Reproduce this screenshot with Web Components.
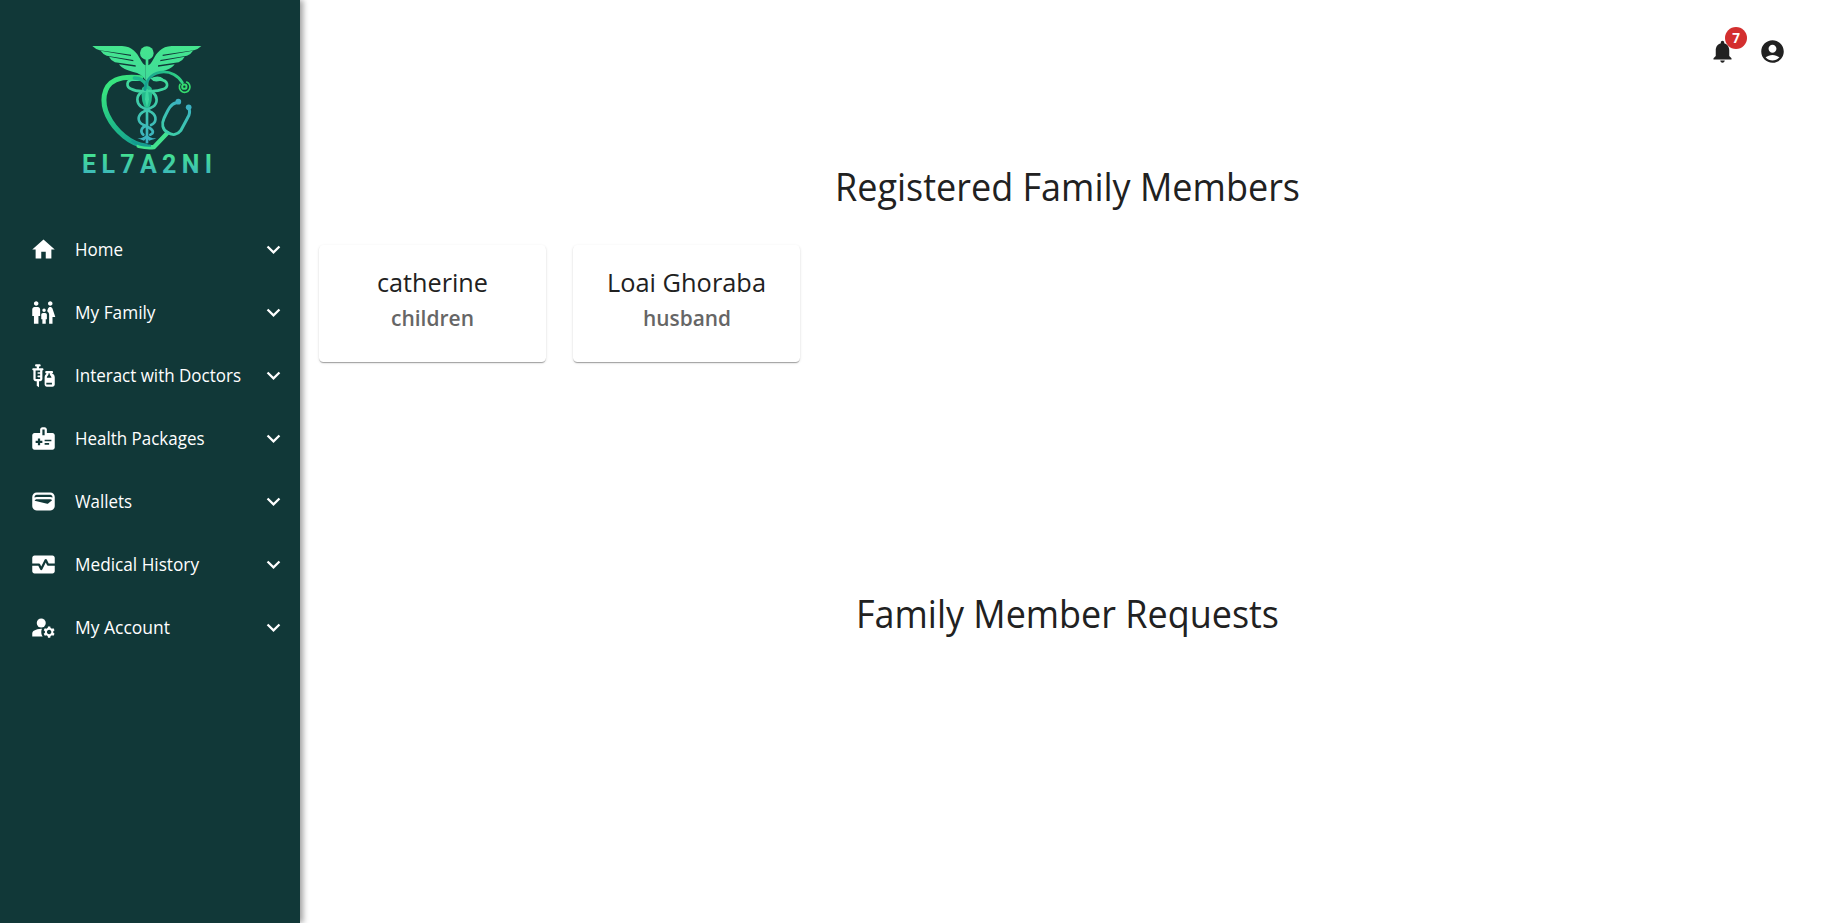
<!DOCTYPE html>
<html lang="en">
<head>
<meta charset="utf-8">
<title>El7a2ni</title>
<style>
html,body{margin:0;height:100%;overflow:hidden;background:#fff}
body{font-family:"Open Sans","Noto Sans",sans-serif;color:#212121}
</style>
</head>
<body>
<family-page></family-page>
<script>
const ICONS = {
  home:'<path d="M10 20v-6h4v6h5v-8h3L12 3 2 12h3v8z"/>',
  family:'<path d="M16 4c0-1.11.89-2 2-2s2 .89 2 2-.89 2-2 2-2-.89-2-2zm4 18v-6h2.5l-2.54-7.63C19.68 7.55 18.92 7 18.06 7h-.12c-.86 0-1.63.55-1.9 1.37l-.86 2.58c1.08.6 1.82 1.73 1.82 3.05v8h3zm-7.5-10.5c.83 0 1.5-.67 1.5-1.5s-.67-1.5-1.5-1.5S11 9.17 11 10s.67 1.5 1.5 1.5zM5.5 6c1.11 0 2-.89 2-2s-.89-2-2-2-2 .89-2 2 .89 2 2 2zm2 16v-7H9V9c0-1.1-.9-2-2-2H4c-1.1 0-2 .9-2 2v6h1.5v7h4zm6.5 0v-4h1v-4c0-.82-.68-1.5-1.5-1.5h-2c-.82 0-1.5.68-1.5 1.5v4h1v4h3z"/>',
  vaccines:'<path d="M11 5.5H8V4h.5c.55 0 1-.45 1-1s-.45-1-1-1h-3c-.55 0-1 .45-1 1s.45 1 1 1H6v1.5H3c-.55 0-1 .45-1 1s.45 1 1 1V15c0 1.1.9 2 2 2h1v4l2 1.5V17h1c1.1 0 2-.9 2-2V7.5c.55 0 1-.45 1-1s-.45-1-1-1zM9 9H7.25c-.41 0-.75.34-.75.75s.34.75.75.75H9V12H7.25c-.41 0-.75.34-.75.75s.34.75.75.75H9V15H5V7.5h4V9zm10.5 1.5V10c.55 0 1-.45 1-1s-.45-1-1-1h-5c-.55 0-1 .45-1 1s.45 1 1 1v.5c0 .5-1.5 1.16-1.5 3V20c0 1.1.9 2 2 2h5c1.1 0 2-.9 2-2v-6.5c0-1.84-1.5-2.5-1.5-3zm-3 0V10h1v.5c0 1.6 1.5 2 1.5 3v.5h-4v-.5c0-1 1.5-1.4 1.5-3zm3 9.5h-5v-1.5h5V20z"/>',
  medical:'<path d="M20 7h-5V4c0-1.1-.9-2-2-2h-2c-1.1 0-2 .9-2 2v3H4c-1.1 0-2 .9-2 2v11c0 1.1.9 2 2 2h16c1.1 0 2-.9 2-2V9c0-1.1-.9-2-2-2zm-9-3h2v5h-2V4zm0 12H9v2H7v-2H5v-2h2v-2h2v2h2v2zm2-1.5V13h6v1.5h-6zm0 3V16h4v1.5h-4z"/>',
  wallet:'<path d="M18 4H6C3.79 4 2 5.79 2 8v8c0 2.21 1.79 4 4 4h12c2.21 0 4-1.79 4-4V8c0-2.21-1.79-4-4-4zm-1.86 9.77c-.24.2-.57.28-.88.2L4.15 11.25C4.45 10.52 5.16 10 6 10h12c.67 0 1.26.34 1.63.84l-3.49 2.93zM6 6h12c1.1 0 2 .9 2 2v.55C19.41 8.21 18.73 8 18 8H6c-.73 0-1.41.21-2 .55V8c0-1.1.9-2 2-2z"/>',
  monitor:'<path d="M15.11 12.45 14 10.24l-3.11 6.21c-.16.34-.51.55-.89.55s-.73-.21-.89-.55L7.38 13H2v5c0 1.1.9 2 2 2h16c1.1 0 2-.9 2-2v-5h-6c-.38 0-.73-.21-.89-.55z"/><path d="M20 4H4c-1.1 0-2 .9-2 2v5h6c.38 0 .73.21.89.55L10 13.76l3.11-6.21c.34-.68 1.45-.68 1.79 0L16.62 11H22V6c0-1.1-.9-2-2-2z"/>',
  account:'<circle cx="10" cy="8" r="4"/><path d="M10.67 13.02c-.22-.01-.44-.02-.67-.02-2.42 0-4.68.67-6.61 1.82-.88.52-1.39 1.5-1.39 2.53V20h9.26c-.79-1.13-1.26-2.51-1.26-4 0-1.07.25-2.07.67-2.98zM20.75 16c0-.22-.03-.42-.06-.63l1.14-1.01-1-1.73-1.45.49c-.32-.27-.68-.48-1.08-.63L18 11h-2l-.3 1.49c-.4.15-.76.36-1.08.63l-1.45-.49-1 1.73 1.14 1.01c-.03.21-.06.41-.06.63s.03.42.06.63l-1.14 1.01 1 1.73 1.45-.49c.32.27.68.48 1.08.63L16 21h2l.3-1.49c.4-.15.76-.36 1.08-.63l1.45.49 1-1.73-1.14-1.01c.03-.21.06-.41.06-.63zM17 18c-1.1 0-2-.9-2-2s.9-2 2-2 2 .9 2 2-.9 2-2 2z"/>',
  chevron:'<path d="M16.59 8.59 12 13.17 7.41 8.59 6 10l6 6 6-6z"/>',
  bell:'<path d="M12 22c1.1 0 2-.9 2-2h-4c0 1.1.89 2 2 2zm6-6v-5c0-3.07-1.64-5.64-4.5-6.32V4c0-.83-.67-1.5-1.5-1.5s-1.5.67-1.5 1.5v.68C7.63 5.36 6 7.92 6 11v5l-2 2v1h16v-1l-2-2z"/>',
  user:'<path d="M12 2C6.48 2 2 6.48 2 12s4.48 10 10 10 10-4.48 10-10S17.52 2 12 2zm0 4c1.93 0 3.5 1.57 3.5 3.5S13.93 13 12 13s-3.5-1.57-3.5-3.5S10.07 6 12 6zm0 14c-2.03 0-4.43-.82-6.14-2.88C7.55 15.8 9.68 15 12 15s4.45.8 6.14 2.12C16.43 19.18 14.03 20 12 20z"/>'
};
const define = (name, html) => customElements.define(name, class extends HTMLElement {
  constructor(){
    super();
    const t = document.createElement('template');
    t.innerHTML = typeof html === 'function' ? html(this) : html;
    this.attachShadow({mode:'open'}).append(t.content.cloneNode(true));
  }
});

define('ui-icon', el => `<style>:host{display:block;flex:none;width:27px;height:27px}svg{display:block;width:100%;height:100%;fill:currentColor}</style>
<svg viewBox="0 0 24 24">${ICONS[el.getAttribute('name')]}</svg>`);

/* One line of text condensed to the width given by its attribute. */
customElements.define('fit-text', class extends HTMLElement {
  constructor(){
    super();
    this.attachShadow({mode:'open'}).innerHTML = `<style>:host{display:block;flex:none;white-space:nowrap}span{display:inline-block;transform-origin:0 50%}</style><span><slot></slot></span>`;
  }
  connectedCallback(){
    const w = +this.getAttribute('width'), s = this.shadowRoot.querySelector('span');
    this.style.width = w + 'px';
    s.style.transform = `scaleX(${w / s.getBoundingClientRect().width})`;
  }
});

define('nav-item', el => `<style>
:host{display:flex;align-items:center;height:63px;padding:0 13px 0 30px;color:#fff;font-size:17.5px;line-height:27px}
.label{flex:1;margin-left:18px}</style>
<ui-icon name="${el.getAttribute('icon')}"></ui-icon><div class="label"><slot></slot></div><ui-icon name="chevron"></ui-icon>`);

define('brand-logo', `<style>:host{display:block;width:155px;height:160px}svg{display:block}text{font-family:Roboto,sans-serif;font-weight:700;font-size:75px}</style>
<svg width="155" height="160" viewBox="0 0 465 480" fill="none" stroke-linecap="round" stroke-linejoin="round">
<defs>
<linearGradient id="v" gradientUnits="userSpaceOnUse" x1="0" y1="48" x2="0" y2="340"><stop stop-color="#45e58e"/><stop offset=".35" stop-color="#40db9a"/><stop offset="1" stop-color="#3cafc4"/></linearGradient>
<linearGradient id="t" gradientUnits="userSpaceOnUse" x1="0" y1="376" x2="0" y2="430"><stop stop-color="#43df93"/><stop offset="1" stop-color="#3dbab9"/></linearGradient>
<linearGradient id="h" gradientUnits="userSpaceOnUse" x1="110" y1="170" x2="225" y2="350"><stop stop-color="#38e47f"/><stop offset=".5" stop-color="#20bd88"/><stop offset="1" stop-color="#159e91"/></linearGradient>
<linearGradient id="a" gradientUnits="userSpaceOnUse" x1="215" y1="160" x2="350" y2="140"><stop stop-color="#139a91"/><stop offset="1" stop-color="#35dc82"/></linearGradient>
<linearGradient id="s" gradientUnits="userSpaceOnUse" x1="340" y1="210" x2="270" y2="350"><stop stop-color="#3bb2c2"/><stop offset=".7" stop-color="#3dcdaa"/><stop offset="1" stop-color="#42e28e"/></linearGradient>
</defs>
<g fill="url(#v)">
<circle cx="230.500" cy="69" r="20.500"/>
<path d="M67 48H156C187 49 201 69 211 88C216 98 222 105 227 106V151C218 137 206 129 190 126C170 121 156 115 147 103L197 110L197 106L135 97Q123 92 117 80L190 94L190 90L110 77Q98 72 92 62L183 78L183 74L89 61Q76 57 67 48Z"/>
<path d="M394 48H305C274 49 260 69 250 88C245 98 239 105 234 106V151C243 137 255 129 271 126C291 121 305 115 314 103L264 110L264 106L326 97Q338 92 344 80L271 94L271 90L351 77Q363 72 369 62L278 78L278 74L372 61Q385 57 394 48Z"/>
<path d="M227 86h8V340h-8z"/>
<path d="M216 174Q231 157 245 174Q251 220 231 242Q210 218 216 174Z" fill="#24bb8c"/>
<path d="M228 178h6l3 30-6 25-6-25z" fill="#3bd69f"/>
<path d="M241 145Q266 134 280 146Q266 158 250 153Z"/>
<path d="M202 325Q218 326 230 314Q242 326 259 325Q243 331 238 332L230 324L222 332Q214 329 202 325Z"/>
</g>
<g stroke="url(#v)" stroke-width="8">
<path d="M215 149H188C168 151 168 171 184 177C193 182 210 184 224 183"/>
<path d="M268 148C297 151 297 172 278 178C268 182 250 184 237 183"/>
<path d="M213 188C198 199 199 219 213 230L245 247C262 259 259 278 243 285"/>
<path d="M249 188C263 199 264 219 249 230L217 247C201 259 203 276 219 284L239 294C252 302 251 310 241 314"/>
<path d="M226 288C212 295 211 306 220 314"/>
</g>
<path d="M212 143C189 142 164 138 137 150C96 169 95 219 113 257C136 305 184 343 226 348" stroke="url(#h)" stroke-width="15"/>
<path d="M193 144Q218 145 228 164" stroke="#1eb68c" stroke-width="10"/>
<path d="M206 348C220 351 236 354 252 351L292 309" stroke="#42e28e" stroke-width="13"/>
<path d="M187 334Q212 348 240 347" stroke="#149b90" stroke-width="7"/>
<path d="M225 179C227 155 241 133 269 127C302 121 327 140 337 158" stroke="url(#a)" stroke-width="8.500"/>
<path d="M350 156A16 16 0 1 1 330 163" stroke="#35dc6f" stroke-width="5"/>
<circle cx="343" cy="170" r="6.500" stroke="#35dc6f" stroke-width="6"/>
<path d="M319 218C300 221 292 245 282 265C274 282 278 298 292 307C308 318 323 314 332 302L353 263C360 252 360 244 357 236" stroke="url(#s)" stroke-width="9"/>
<g fill="#3bb2c2"><circle cx="325" cy="215" r="8.500"/><circle cx="356" cy="232" r="8.500"/></g>
<text x="36" y="429.500" fill="url(#t)" textLength="390">EL7A2NI</text>
</svg>`);

define('side-bar', `<style>
:host{display:flex;flex-direction:column;width:300px;height:100%;background:#113838;box-shadow:3px 0 6px rgba(0,0,0,.38);box-sizing:border-box;z-index:2;padding-top:30px;flex:none}
brand-logo{margin:0 0 27.500px 70px}</style>
<brand-logo></brand-logo>
<nav>
<nav-item icon="home"><fit-text width="48">Home</fit-text></nav-item>
<nav-item icon="family"><fit-text width="80.500">My Family</fit-text></nav-item>
<nav-item icon="vaccines"><fit-text width="166">Interact with Doctors</fit-text></nav-item>
<nav-item icon="medical"><fit-text width="129.500">Health Packages</fit-text></nav-item>
<nav-item icon="wallet"><fit-text width="57">Wallets</fit-text></nav-item>
<nav-item icon="monitor"><fit-text width="124">Medical History</fit-text></nav-item>
<nav-item icon="account"><fit-text width="95">My Account</fit-text></nav-item>
</nav>`);

define('member-card', `<style>
:host{display:flex;flex-direction:column;align-items:center;width:227px;height:117px;box-sizing:border-box;padding-top:20px;background:#fff;border-radius:4.500px;box-shadow:0 2px 1px -1px rgba(0,0,0,.2),0 1px 1px rgba(0,0,0,.14),0 1px 3px rgba(0,0,0,.12)}
.name{font-size:26px;line-height:35px}.rel{font-size:21.500px;line-height:35px;font-weight:600;color:#666}</style>
<div class="name"><slot name="name"></slot></div><div class="rel"><slot></slot></div>`);

define('top-bar', `<style>
:host{display:flex;justify-content:flex-end;gap:23px;height:65px;padding:38px 37px 0 0;box-sizing:border-box}
.bell{position:relative;height:27px}
.badge{position:absolute;left:16px;top:-11.500px;width:22px;height:22px;border-radius:50%;background:#d32f2f;color:#fff;font-weight:700;font-size:13.500px;line-height:22px;text-align:center}</style>
<div class="bell"><ui-icon name="bell"></ui-icon><span class="badge">7</span></div>
<ui-icon name="user"></ui-icon>`);

define('member-section', `<style>
:host{display:block}
header{display:flex;justify-content:center;font-size:37.500px;line-height:52px}
.cards{display:flex;gap:27px;padding-top:32px}</style>
<header><slot name="title"></slot></header><div class="cards"><slot></slot></div>`);

define('family-page', `<style>
:host{display:flex;height:100vh}
main{flex:1;min-width:0}
.body{margin:96px 8px 0 19px}
member-section{min-height:300px}
member-section:first-child{height:427px}</style>
<side-bar></side-bar>
<main><top-bar></top-bar><div class="body">
<member-section><fit-text slot="title" width="465">Registered Family Members</fit-text>
<member-card><fit-text slot="name" width="111">catherine</fit-text><fit-text width="83">children</fit-text></member-card>
<member-card><fit-text slot="name" width="159">Loai Ghoraba</fit-text><fit-text width="88">husband</fit-text></member-card>
</member-section>
<member-section><fit-text slot="title" width="423">Family Member Requests</fit-text></member-section>
</div></main>`);
</script>
</body>
</html>
